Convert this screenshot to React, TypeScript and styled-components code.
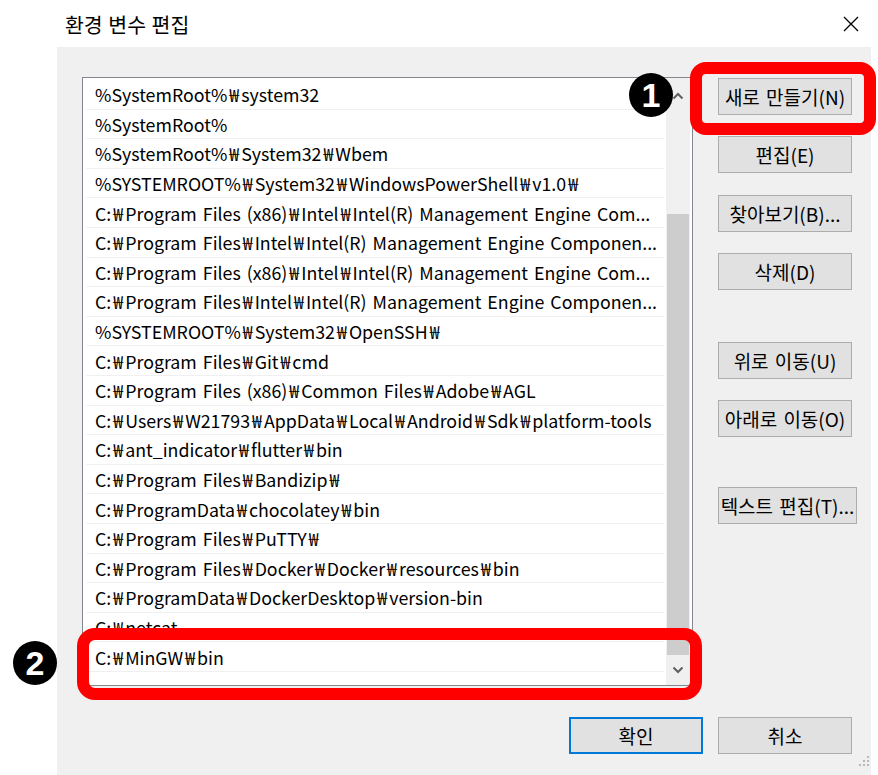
import { Fragment } from "react";
import { createGlobalStyle, styled } from "styled-components";

const GlobalStyle = createGlobalStyle`
  body {
    margin: 0;
    background: #ffffff;
    font-family: "Noto Sans CJK KR", "Noto Sans", sans-serif;
  }
`;

const Window = styled.div`
  position: relative;
  width: 878px;
  height: 775px;
  overflow: hidden;
  background: #ffffff;
`;

const TitleBar = styled.div`
  height: 47px;
  display: flex;
  align-items: center;
  justify-content: space-between;
  padding: 0 18px 0 65px;
  box-sizing: border-box;

  h1 {
    margin: 0;
    font-size: 20.5px;
    font-weight: 400;
    word-spacing: 1px;
    color: #000;
  }
`;

const CloseButton = styled.div`
  width: 18px;
  height: 18px;
  display: flex;
  align-items: center;
  justify-content: center;
`;

const Panel = styled.div`
  margin: 0 7px 0 57px;
  height: 728px;
  background: #f0f0f0;
  padding: 30px 19px 0 25px;
  box-sizing: border-box;
  display: flex;
  flex-direction: column;
`;

const MainRow = styled.div`
  display: flex;
  gap: 25px;
  align-items: flex-start;
`;

const ListBox = styled.div`
  flex-shrink: 0;
  width: 611px;
  height: 609px;
  box-sizing: border-box;
  border: 1px solid #828790;
  background: #ffffff;
  display: flex;
  padding: 2px 2px 0 3px;
`;

const Rows = styled.div`
  flex: 1;
  overflow: hidden;
  min-width: 0;
`;

const Row = styled.div`
  height: 29.6px;
  box-sizing: border-box;
  border-bottom: 1px solid #f0f0f0;
  padding-left: 9px;
  display: flex;
  align-items: center;
  font-size: 17.8px;
  word-spacing: 2px;
  color: #000;
  white-space: nowrap;
  overflow: hidden;
`;

const Won = styled.span`
  margin: 0 2px;
`;

const ScrollBar = styled.div`
  width: 24px;
  margin-left: 2px;
  margin-top: -2px;
  background: #f0f0f0;
  display: flex;
  flex-direction: column;
`;

const ArrowButton = styled.div<{ $h: number }>`
  height: ${(p) => p.$h}px;
  display: flex;
  align-items: center;
  justify-content: center;
`;

const Track = styled.div`
  flex: 1;
  display: flex;
  flex-direction: column;
  justify-content: flex-end;
  padding: 0 1px;
`;

const Thumb = styled.div`
  background: #cdcdcd;
`;

const SideColumn = styled.div`
  width: 134px;
  flex-shrink: 0;
  display: flex;
  flex-direction: column;
  align-items: flex-start;
`;

const Button = styled.div<{ $top: number; $wide?: boolean; $default?: boolean }>`
  margin-top: ${(p) => p.$top}px;
  width: ${(p) => (p.$wide ? 139 : 134)}px;
  height: 37px;
  flex-shrink: 0;
  box-sizing: border-box;
  border: ${(p) => (p.$default ? "2px solid #0078d7" : "1px solid #adadad")};
  background: #e1e1e1;
  display: flex;
  align-items: center;
  justify-content: center;
  font-size: 19px;
  word-spacing: 2px;
  color: #000;
  white-space: nowrap;
  overflow: visible;
`;

const Footer = styled.div`
  display: flex;
  justify-content: flex-end;
  gap: 15px;
  margin-top: 31px;
`;

const Grip = styled.div`
  position: absolute;
  right: 8px;
  bottom: 3px;
`;

const RedBox = styled.div<{ $x: number; $y: number; $w: number; $h: number; $r: number }>`
  position: absolute;
  left: ${(p) => p.$x}px;
  top: ${(p) => p.$y}px;
  width: ${(p) => p.$w}px;
  height: ${(p) => p.$h}px;
  box-sizing: border-box;
  border: 12px solid #ff0000;
  border-radius: ${(p) => p.$r}px;
  pointer-events: none;
`;

const Badge = styled.div<{ $x: number; $y: number }>`
  position: absolute;
  left: ${(p) => p.$x - 22}px;
  top: ${(p) => p.$y - 22}px;
  width: 44px;
  height: 44px;
  border-radius: 50%;
  background: #000;
  color: #fff;
  display: flex;
  align-items: center;
  justify-content: center;
  font-family: "Liberation Sans", Arial, sans-serif;
  font-weight: 700;
  font-size: 34px;
  line-height: 1;
`;

const paths = [
  "%SystemRoot%₩system32",
  "%SystemRoot%",
  "%SystemRoot%₩System32₩Wbem",
  "%SYSTEMROOT%₩System32₩WindowsPowerShell₩v1.0₩",
  "C:₩Program Files (x86)₩Intel₩Intel(R) Management Engine Com...",
  "C:₩Program Files₩Intel₩Intel(R) Management Engine Componen...",
  "C:₩Program Files (x86)₩Intel₩Intel(R) Management Engine Com...",
  "C:₩Program Files₩Intel₩Intel(R) Management Engine Componen...",
  "%SYSTEMROOT%₩System32₩OpenSSH₩",
  "C:₩Program Files₩Git₩cmd",
  "C:₩Program Files (x86)₩Common Files₩Adobe₩AGL",
  "C:₩Users₩W21793₩AppData₩Local₩Android₩Sdk₩platform-tools",
  "C:₩ant_indicator₩flutter₩bin",
  "C:₩Program Files₩Bandizip₩",
  "C:₩ProgramData₩chocolatey₩bin",
  "C:₩Program Files₩PuTTY₩",
  "C:₩Program Files₩Docker₩Docker₩resources₩bin",
  "C:₩ProgramData₩DockerDesktop₩version-bin",
  "C:₩netcat",
  "C:₩MinGW₩bin",
  "",
];

const sideButtons = [
  { label: "새로 만들기(N)", top: 1 },
  { label: "편집(E)", top: 21 },
  { label: "찾아보기(B)...", top: 22 },
  { label: "삭제(D)", top: 21 },
  { label: "위로 이동(U)", top: 52 },
  { label: "아래로 이동(O)", top: 21 },
  { label: "텍스트 편집(T)...", top: 50, wide: true },
];

const PathText = ({ text }: { text: string }) => (
  <>
    {text.split("₩").map((part, i) => (
      <Fragment key={i}>
        {i > 0 && <Won>₩</Won>}
        {part}
      </Fragment>
    ))}
  </>
);

const Chevron = ({ up }: { up?: boolean }) => (
  <svg width="12" height="8" viewBox="0 0 12 8">
    <path
      d={up ? "M1.5 6.5 L6 2 L10.5 6.5" : "M1.5 1.5 L6 6 L10.5 1.5"}
      fill="none"
      stroke="#606060"
      strokeWidth="2"
    />
  </svg>
);

export default function App() {
  return (
    <Window>
      <GlobalStyle />
      <TitleBar>
        <h1>환경 변수 편집</h1>
        <CloseButton>
          <svg width="16" height="16" viewBox="0 0 16 16">
            <path d="M1 1 L15 15 M15 1 L1 15" stroke="#000" strokeWidth="1.3" />
          </svg>
        </CloseButton>
      </TitleBar>

      <Panel>
        <MainRow>
          <ListBox>
            <Rows>
              {paths.map((p, i) => (
                <Row key={i}>
                  <PathText text={p} />
                </Row>
              ))}
            </Rows>
            <ScrollBar>
              <ArrowButton $h={36}>
                <Chevron up />
              </ArrowButton>
              <Track>
                <Thumb style={{ height: 441 }} />
              </Track>
              <ArrowButton $h={30}>
                <Chevron />
              </ArrowButton>
            </ScrollBar>
          </ListBox>

          <SideColumn>
            {sideButtons.map((b) => (
              <Button key={b.label} $top={b.top} $wide={b.wide}>
                {b.label}
              </Button>
            ))}
          </SideColumn>
        </MainRow>

        <Footer>
          <Button $top={0} $default>
            확인
          </Button>
          <Button $top={0}>취소</Button>
        </Footer>
      </Panel>

      <Grip>
        <svg width="12" height="12" viewBox="0 0 12 12" fill="#b8b8b8">
          <rect x="9" y="1" width="2" height="2" />
          <rect x="5" y="5" width="2" height="2" />
          <rect x="9" y="5" width="2" height="2" />
          <rect x="1" y="9" width="2" height="2" />
          <rect x="5" y="9" width="2" height="2" />
          <rect x="9" y="9" width="2" height="2" />
        </svg>
      </Grip>

      <RedBox $x={690} $y={62} $w={186} $h={73} $r={16} />
      <RedBox $x={77} $y={628} $w={625} $h={72} $r={18} />
      <Badge $x={651} $y={95}>1</Badge>
      <Badge $x={35} $y={663}>2</Badge>
    </Window>
  );
}
